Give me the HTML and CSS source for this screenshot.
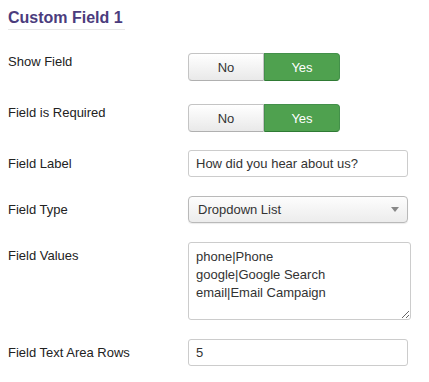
FILE: index.html
```html
<!DOCTYPE html>
<html lang="en">
<head>
  <meta charset="UTF-8" />
  <title>Custom Field 1</title>
  <link rel="stylesheet" href="styles.css">
</head>
<body>

  <h3 class="section-title">Custom Field 1</h3>

  <div class="control-group toggle-row first">
    <label class="control-label">Show Field</label>
    <div class="btn-group">
      <button class="btn">No</button>
      <button class="btn btn-yes">Yes</button>
    </div>
  </div>

  <div class="control-group toggle-row">
    <label class="control-label">Field is Required</label>
    <div class="btn-group">
      <button class="btn">No</button>
      <button class="btn btn-yes">Yes</button>
    </div>
  </div>

  <div class="control-group">
    <label class="control-label" for="label">Field Label</label>
    <input id="label" class="text-input" type="text" value="How did you hear about us?" />
  </div>

  <div class="control-group">
    <label class="control-label">Field Type</label>
    <div class="select-box">
      <span>Dropdown List</span>
      <span class="caret"></span>
    </div>
  </div>

  <div class="control-group">
    <label class="control-label" for="values">Field Values</label>
    <textarea id="values" class="text-area">phone|Phone
google|Google Search
email|Email Campaign</textarea>
  </div>

  <div class="control-group">
    <label class="control-label" for="rows">Field Text Area Rows</label>
    <input id="rows" class="text-input" type="text" value="5" />
  </div>

</body>
</html>
```

FILE: styles.css
```css
* { box-sizing: border-box; }
body {
  margin: 0;
  padding: 0 8px;
  font-family: 'Liberation Sans', Arial, sans-serif;
  font-size: 13px;
  line-height: 18px;
  color: #333;
  background: #fff;
}
.section-title {
  display: inline-block;
  margin: 10px 0 23px;
  padding-bottom: 3px;
  font-size: 16px;
  line-height: 16px;
  font-weight: bold;
  color: #4b3c7d;
  border-bottom: 1px solid #e8e8e8;
  padding-right: 2px;
}
.control-group {
  display: flex;
  align-items: flex-start;
  margin-bottom: 19px;
}
.toggle-row { margin-bottom: 18px; }
.toggle-row.first { margin-bottom: 23px; }
.control-label {
  width: 180px;
  flex: none;
  padding-top: 5px;
  color: #222;
}
.toggle-row .control-label { padding-top: 0; }
.btn-group {
  display: flex;
  width: 152px;
  height: 28px;
}
.btn {
  flex: 1;
  margin: 0;
  font-family: inherit;
  font-size: 13px;
  color: #333;
  background: linear-gradient(#ffffff, #e9e9e9);
  border: 1px solid #c4c4c4;
  border-bottom-color: #b0b0b0;
  border-radius: 4px 0 0 4px;
  padding: 0;
}
.btn-yes {
  color: #fff;
  background: #4fa14f;
  border-color: #43904a;
  border-bottom-color: #2f7a34;
  border-radius: 0 4px 4px 0;
}
.text-input {
  width: 220px;
  height: 27px;
  padding: 4px 7px;
  font-family: inherit;
  font-size: 13px;
  color: #333;
  border: 1px solid #cccccc;
  border-radius: 3px;
  margin: 0;
}
.select-box {
  width: 220px;
  height: 27px;
  display: flex;
  align-items: center;
  justify-content: space-between;
  padding: 0 8px 0 9px;
  color: #333;
  background: linear-gradient(#fdfdfd, #ececec);
  border: 1px solid #b9b9b9;
  border-radius: 4px;
  box-shadow: 0 1px 1px rgba(0,0,0,0.08);
}
.caret {
  width: 0;
  height: 0;
  border-left: 4px solid transparent;
  border-right: 4px solid transparent;
  border-top: 5px solid #888;
}
.text-area {
  width: 223px;
  height: 78px;
  padding: 5px 7px;
  margin: 0;
  font-family: inherit;
  font-size: 13px;
  line-height: 18px;
  color: #333;
  border: 1px solid #cccccc;
  border-radius: 3px;
  resize: both;
}
```
